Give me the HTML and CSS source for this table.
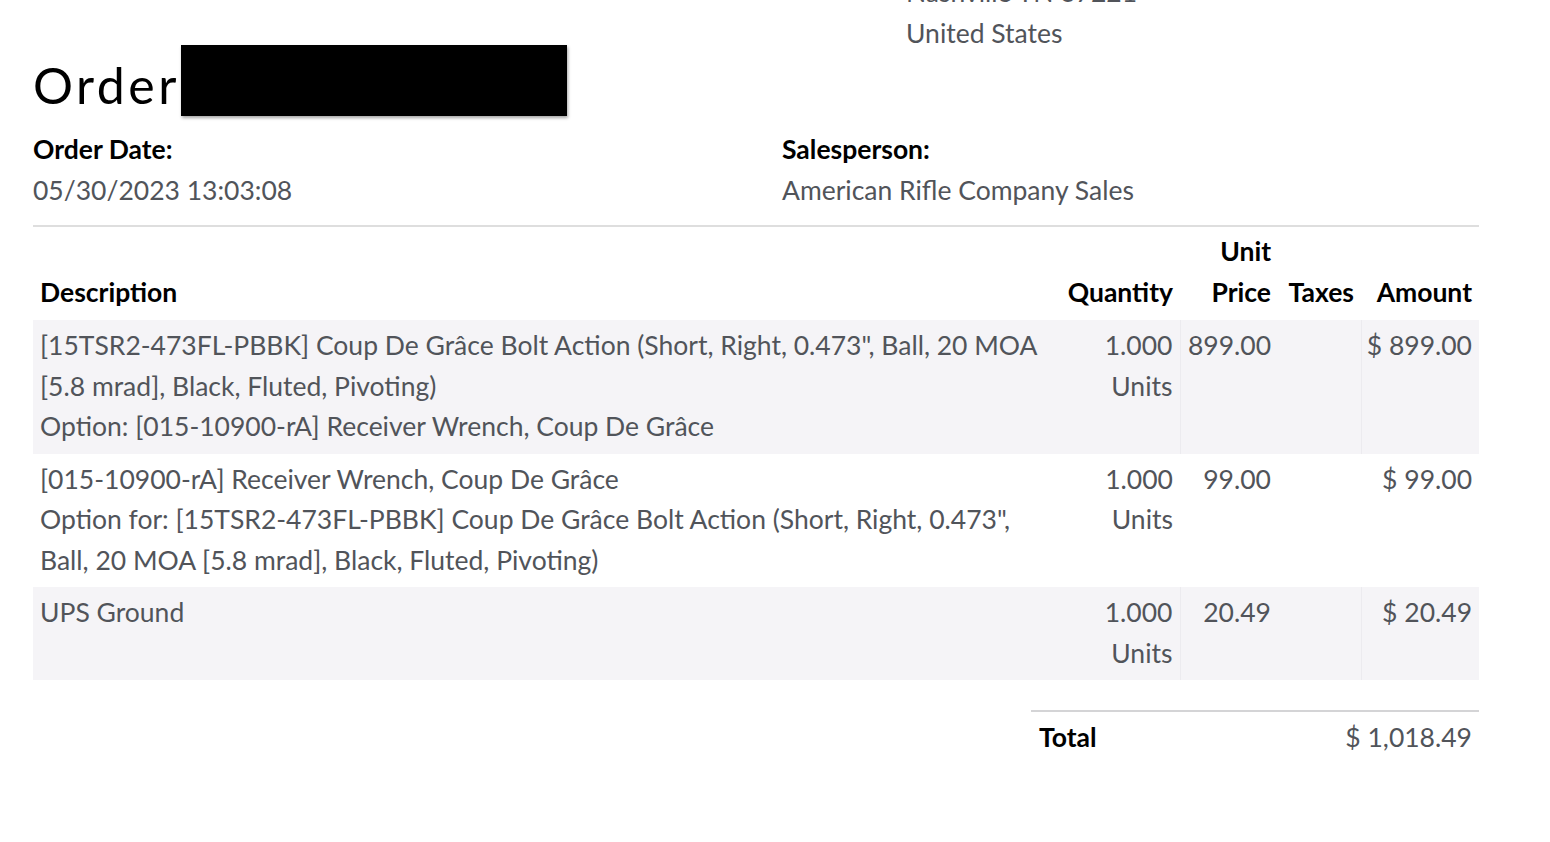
FILE: index.html
```html
<!DOCTYPE html>
<html lang="en">
<head>
<meta charset="utf-8">
<title>Order</title>
<link rel="stylesheet" href="styles.css">
</head>
<body>
<div class="page">
  <div class="address-row">
    <address class="address">
      <div>Nashville TN 37221</div>
      <div>United States</div>
    </address>
  </div>

  <h2 class="title"><span class="title-text">Order</span><span class="redact"></span></h2>

  <div class="info">
    <div class="info-item">
      <strong class="info-label">Order Date:</strong>
      <p class="info-value">05/30/2023 13:03:08</p>
    </div>
    <div class="info-item">
      <strong class="info-label">Salesperson:</strong>
      <p class="info-value">American Rifle Company Sales</p>
    </div>
  </div>

  <table class="lines">
    <colgroup>
      <col class="c-desc">
      <col class="c-qty">
      <col class="c-price">
      <col class="c-tax">
      <col class="c-amt">
    </colgroup>
    <thead>
      <tr>
        <th class="left">Description</th>
        <th class="right">Quantity</th>
        <th class="right">Unit Price</th>
        <th class="right">Taxes</th>
        <th class="right amt">Amount</th>
      </tr>
    </thead>
    <tbody>
      <tr class="shade">
        <td>[15TSR2-473FL-PBBK] Coup De Grâce Bolt Action (Short, Right, 0.473", Ball, 20 MOA [5.8 mrad], Black, Fluted, Pivoting)<br>Option: [015-10900-rA] Receiver Wrench, Coup De Grâce</td>
        <td class="right">1.000 <span class="unit">Units</span></td>
        <td class="right sep">899.00</td>
        <td></td>
        <td class="right sep amt">$&nbsp;899.00</td>
      </tr>
      <tr>
        <td>[015-10900-rA] Receiver Wrench, Coup De Grâce<br>Option for: [15TSR2-473FL-PBBK] Coup De Grâce Bolt Action (Short, Right, 0.473", Ball, 20 MOA [5.8 mrad], Black, Fluted, Pivoting)</td>
        <td class="right">1.000 <span class="unit">Units</span></td>
        <td class="right">99.00</td>
        <td></td>
        <td class="right amt">$&nbsp;99.00</td>
      </tr>
      <tr class="shade">
        <td>UPS Ground</td>
        <td class="right">1.000 <span class="unit">Units</span></td>
        <td class="right sep">20.49</td>
        <td></td>
        <td class="right sep amt">$&nbsp;20.49</td>
      </tr>
    </tbody>
  </table>

  <div class="totals-row">
    <table class="totals">
      <tr>
        <th class="left">Total</th>
        <td class="right">$&nbsp;1,018.49</td>
      </tr>
    </table>
  </div>
</div>
</body>
</html>
```

FILE: styles.css
```css
html, body {
  margin: 0;
  padding: 0;
  background: #ffffff;
}

body {
  font-family: "Lato", "Open Sans", "Liberation Sans", sans-serif;
  font-size: 26.5px;
  line-height: 40.5px;
  color: #51545a;
  overflow: hidden;
}

.page {
  width: 1446px;
  margin-left: 33px;
}

.address-row {
  display: flex;
  margin-top: -28px;
}

.address {
  font-style: normal;
  margin-left: 873px;
}

.title {
  margin: 5px 0 0 0;
  font-size: 50px;
  font-weight: 400;
  line-height: 55px;
  color: #000;
  display: flex;
  align-items: flex-start;
}

.title-text {
  letter-spacing: 3.5px;
}

.redact {
  display: block;
  width: 386px;
  height: 71px;
  margin-left: 1px;
  margin-top: -13px;
  margin-bottom: -3px;
  background: #000;
  box-shadow: 1px 2px 3px rgba(0, 0, 0, 0.35);
}

.info {
  display: grid;
  grid-template-columns: 749px 1fr;
  margin-top: 16px;
  padding-bottom: 15px;
  border-bottom: 2px solid #dedede;
}

.info-label {
  display: block;
  color: #000;
  font-weight: 700;
}

.info-value {
  margin: 0;
}

.lines {
  width: 100%;
  border-collapse: collapse;
  table-layout: fixed;
}

.c-desc { width: 1025px; }
.c-qty { width: 122px; }
.c-price { width: 98px; }
.c-tax { width: 83px; }
.c-amt { width: 118px; }

.lines th,
.lines td {
  padding: 5px 7px 7px 7px;
  vertical-align: top;
}

.lines th {
  color: #000;
  font-weight: 700;
  vertical-align: bottom;
  padding-top: 4px;
  padding-bottom: 8px;
}

.lines .amt {
  padding-left: 2px;
  white-space: nowrap;
}

.left { text-align: left; }
.right { text-align: right; }

.unit {
  white-space: nowrap;
}

.shade td {
  background: #f5f4f7;
}

.shade td.sep {
  border-left: 1px solid #ecebef;
}

.totals-row {
  display: flex;
  justify-content: flex-end;
  margin-top: 30px;
}

.totals {
  width: 448px;
  border-collapse: collapse;
  border-top: 2px solid #d4d4d6;
}

.totals th,
.totals td {
  padding: 5px 7px 8px 8px;
}

.totals th {
  color: #000;
  font-weight: 700;
}
```
